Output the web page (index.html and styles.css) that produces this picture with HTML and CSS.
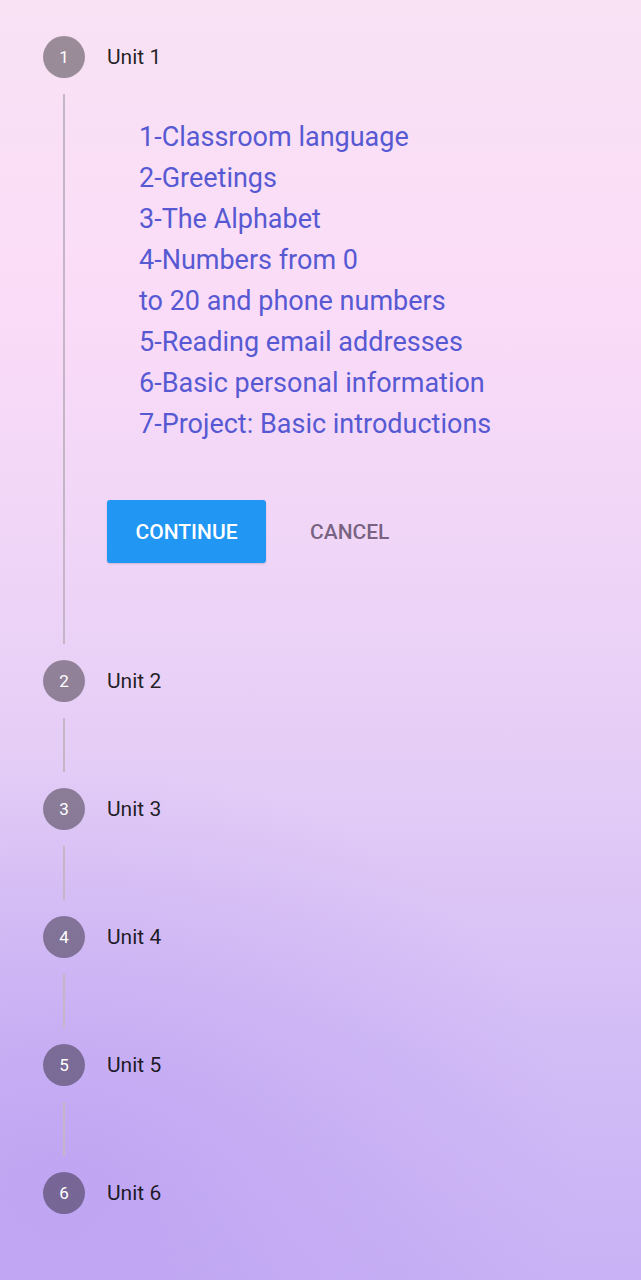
FILE: index.html
```html
<!DOCTYPE html>
<html lang="en">
<head>
<meta charset="utf-8">
<title>Units</title>
<link rel="stylesheet" href="styles.css">
</head>
<body>
<main class="stepper">
  <section class="step">
    <div class="step-head"><span class="dot">1</span><span class="title">Unit 1</span></div>
    <div class="step-body expanded">
      <ul class="lessons">
        <li>1-Classroom language</li>
        <li>2-Greetings</li>
        <li>3-The Alphabet</li>
        <li>4-Numbers from 0</li>
        <li>to 20 and phone numbers</li>
        <li>5-Reading email addresses</li>
        <li>6-Basic personal information</li>
        <li>7-Project: Basic introductions</li>
      </ul>
      <div class="actions">
        <button class="btn btn-primary">CONTINUE</button>
        <button class="btn btn-text">CANCEL</button>
      </div>
    </div>
  </section>
  <section class="step">
    <div class="step-head"><span class="dot">2</span><span class="title">Unit 2</span></div>
    <div class="step-body"></div>
  </section>
  <section class="step">
    <div class="step-head"><span class="dot">3</span><span class="title">Unit 3</span></div>
    <div class="step-body"></div>
  </section>
  <section class="step">
    <div class="step-head"><span class="dot">4</span><span class="title">Unit 4</span></div>
    <div class="step-body"></div>
  </section>
  <section class="step">
    <div class="step-head"><span class="dot">5</span><span class="title">Unit 5</span></div>
    <div class="step-body"></div>
  </section>
  <section class="step">
    <div class="step-head"><span class="dot">6</span><span class="title">Unit 6</span></div>
  </section>
</main>
</body>
</html>
```
FILE: styles.css
```css
html, body {
  margin: 0;
  padding: 0;
}
body {
  min-height: 1280px;
  font-family: Roboto, "Liberation Sans", sans-serif;
  background:
    radial-gradient(ellipse 520px 420px at 60px 1180px, rgba(180, 150, 240, 0.55), rgba(180, 150, 240, 0) 100%),
    linear-gradient(180deg, #f8e2f4 0px, #fbdcf8 300px, #efd5f7 560px, #e2cbf6 800px, #d3bdf6 1040px, #c9b2f5 1280px);
}
.stepper {
  display: flex;
  flex-direction: column;
  padding: 36px 0 0 43px;
}
.step {
  display: flex;
  flex-direction: column;
}
.step-head {
  display: flex;
  align-items: center;
  gap: 22px;
  height: 42px;
}
.dot {
  width: 42px;
  height: 42px;
  border-radius: 50%;
  background: rgba(0, 0, 0, 0.38);
  color: #ffffff;
  font-size: 17px;
  display: flex;
  align-items: center;
  justify-content: center;
  flex-shrink: 0;
}
.title {
  font-size: 21px;
  color: rgba(0, 0, 0, 0.87);
}
.step-body {
  margin: 16px 0 16px 20px;
  border-left: 2px solid #c4b6c6;
  min-height: 54px;
}
.step-body.expanded {
  padding: 23px 0 81px 74px;
  min-height: 0;
}
.lessons {
  list-style: none;
  margin: 0;
  padding: 0;
  font-size: 27px;
  line-height: 41px;
  color: #5759d3;
}
.actions {
  display: flex;
  align-items: center;
  gap: 44px;
  margin: 55px 0 0 -32px;
}
.btn {
  font-family: Roboto, "Liberation Sans", sans-serif;
  font-weight: 500;
  font-size: 21px;
  border: none;
  background: none;
  cursor: pointer;
}
.btn-primary {
  background: #2196f3;
  color: #ffffff;
  height: 63px;
  width: 159px;
  border-radius: 3px;
  box-shadow: 0 1px 2px rgba(0, 0, 0, 0.15);
  padding: 0;
}
.btn-text {
  color: rgba(40, 20, 50, 0.62);
  padding: 0;
}
```
